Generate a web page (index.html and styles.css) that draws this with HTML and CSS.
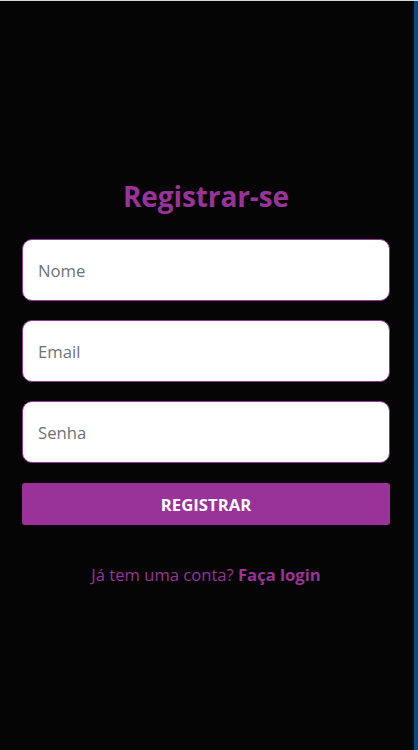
FILE: index.html
```html
<!DOCTYPE html>
<html lang="pt">
<head>
<meta charset="utf-8">
<link rel="stylesheet" href="styles.css">
</head>
<body>
<div class="frame">
  <main class="page">
    <h1 class="title">Registrar-se</h1>
    <form class="form">
      <input class="field" type="text" placeholder="Nome">
      <input class="field" type="email" placeholder="Email">
      <input class="field" type="password" placeholder="Senha">
      <button class="btn" type="button">REGISTRAR</button>
    </form>
    <p class="footer">Já tem uma conta? <a class="link" href="#">Faça login</a></p>
  </main>
  <div class="edge"></div>
</div>
</body>
</html>
```
FILE: styles.css
```css
html, body {
  margin: 0;
  padding: 0;
  height: 100%;
  background: #050505;
}
body {
  font-family: "Open Sans", "Noto Sans", sans-serif;
  border-top: 1px solid #d8d8d8;
  box-sizing: border-box;
}
.frame {
  display: flex;
  height: 749px;
}
.page {
  flex: 1;
  padding: 0 24px 0 22px;
  display: flex;
  flex-direction: column;
}
.edge {
  width: 4px;
  background: #0b4a7c;
}
.title {
  margin: 176px 0 0;
  text-align: center;
  color: #993399;
  font-size: 28px;
  font-weight: 700;
  line-height: 38px;
  letter-spacing: -0.1px;
}
.form {
  margin-top: 24px;
  display: flex;
  flex-direction: column;
  gap: 20px;
}
.field {
  box-sizing: border-box;
  width: 368px;
  height: 62px;
  padding: 1px 15px 0;
  border: 1px solid #993399;
  border-radius: 10px;
  background: #fff;
  font-family: inherit;
  font-size: 16.7px;
  color: #333;
  outline: none;
}
.field + .field {
  margin-top: -1px;
}
.field::placeholder {
  color: #6b7378;
}
.btn {
  height: 42px;
  width: 368px;
  border: none;
  border-radius: 3px;
  background: #993399;
  color: #fff;
  font-family: inherit;
  font-size: 16.7px;
  font-weight: 700;
}
.footer {
  margin: 39px 0 0;
  text-align: center;
  color: #993399;
  font-size: 16.6px;
  line-height: 22px;
}
.link {
  color: #993399;
  font-weight: 700;
  text-decoration: none;
}
```
